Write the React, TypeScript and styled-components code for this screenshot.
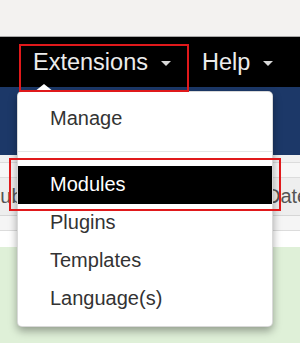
import React from "react";
import styled, { createGlobalStyle } from "styled-components";

const Global = createGlobalStyle`
  html, body { margin: 0; padding: 0; }
  body { font-family: "Liberation Sans", Arial, sans-serif; background: #fff; }
`;

const Page = styled.div`
  position: relative;
  width: 300px;
  height: 359px;
  overflow: hidden;
  background: #fff;
`;

const TopBar = styled.div`
  height: 36px;
  background: #f3f2f0;
  border-bottom: 1px solid #a9a9a9;
`;

const Navbar = styled.nav`
  height: 50px;
  background: #000;
  display: flex;
  align-items: center;
  padding-left: 33px;
  gap: 31px;
`;

const NavItem = styled.div`
  position: relative;
  display: flex;
  align-items: center;
  font-size: 23.5px;
  line-height: 50px;
  color: #ececec;
`;

const Caret = styled.span`
  display: inline-block;
  width: 0;
  height: 0;
  margin-left: 13px;
  margin-top: 2px;
  border-top: 5px solid #d8d8d8;
  border-left: 5px solid transparent;
  border-right: 5px solid transparent;
`;

const Outline = styled.div<{ $l: number; $t: number; $w: number; $h: number }>`
  position: absolute;
  left: ${(p) => p.$l}px;
  top: ${(p) => p.$t}px;
  width: ${(p) => p.$w}px;
  height: ${(p) => p.$h}px;
  border: 2px solid #e0191b;
  box-sizing: border-box;
  pointer-events: none;
  z-index: 5;
`;

const SubHeader = styled.div`
  height: 68px;
  background: #1c3868;
`;

const Strip = styled.div<{ $h: number; $bg: string; $line?: boolean }>`
  height: ${(p) => p.$h}px;
  background: ${(p) => p.$bg};
  border-bottom: ${(p) => (p.$line ? "1px solid #dcdcdc" : "none")};
`;

const HeaderRow = styled.div`
  height: 37px;
  background: #eeeeee;
  border-bottom: 1px solid #d6d6d6;
  display: grid;
  grid-template-columns: 279px 1fr;
  margin-left: -13px;
  align-items: center;
  font-size: 20px;
  color: #555;
  white-space: nowrap;
  overflow: hidden;
`;

const GreenRow = styled.div`
  height: 96px;
  background: #dff0d8;
`;

const Menu = styled.ul`
  position: absolute;
  left: 17px;
  top: 91px;
  width: 256px;
  margin: 0;
  padding: 8px 0;
  list-style: none;
  background: #fff;
  border: 1px solid rgba(0, 0, 0, 0.15);
  border-radius: 5px;
  box-sizing: border-box;
  box-shadow: 0 4px 9px rgba(0, 0, 0, 0.35);
  z-index: 3;

  &::before {
    content: "";
    position: absolute;
    left: 16px;
    top: -8px;
    border-bottom: 8px solid #fff;
    border-left: 10px solid transparent;
    border-right: 10px solid transparent;
  }
`;

const MenuItem = styled.li<{ $active?: boolean }>`
  height: 38px;
  line-height: 37px;
  padding-left: 32px;
  font-size: 20px;
  color: ${(p) => (p.$active ? "#fff" : "#333")};
  background: ${(p) => (p.$active ? "#000" : "transparent")};
`;

const Divider = styled.li`
  height: 1px;
  margin: 13px 0 14px;
  background: #e5e5e5;
`;

export default function App() {
  return (
    <Page>
      <Global />
      <TopBar />
      <Navbar>
        <NavItem>
          Extensions
          <Caret />
        </NavItem>
        <NavItem>
          Help
          <Caret />
        </NavItem>
      </Navbar>
      <SubHeader />
      <Strip $h={7} $bg="#f1f1f1" $line />
      <Strip $h={14} $bg="#f7f7f7" $line />
      <HeaderRow>
        <span>Published</span>
        <span>Date</span>
      </HeaderRow>
      <Strip $h={14} $bg="#f5f5f5" $line />
      <Strip $h={16} $bg="#ffffff" />
      <GreenRow />
      <Menu>
        <MenuItem>Manage</MenuItem>
        <Divider />
        <MenuItem $active>Modules</MenuItem>
        <MenuItem>Plugins</MenuItem>
        <MenuItem>Templates</MenuItem>
        <MenuItem>Language(s)</MenuItem>
      </Menu>
      <Outline $l={19} $t={44} $w={170} $h={48} />
      <Outline $l={9} $t={158} $w={272} $h={53} />
    </Page>
  );
}
